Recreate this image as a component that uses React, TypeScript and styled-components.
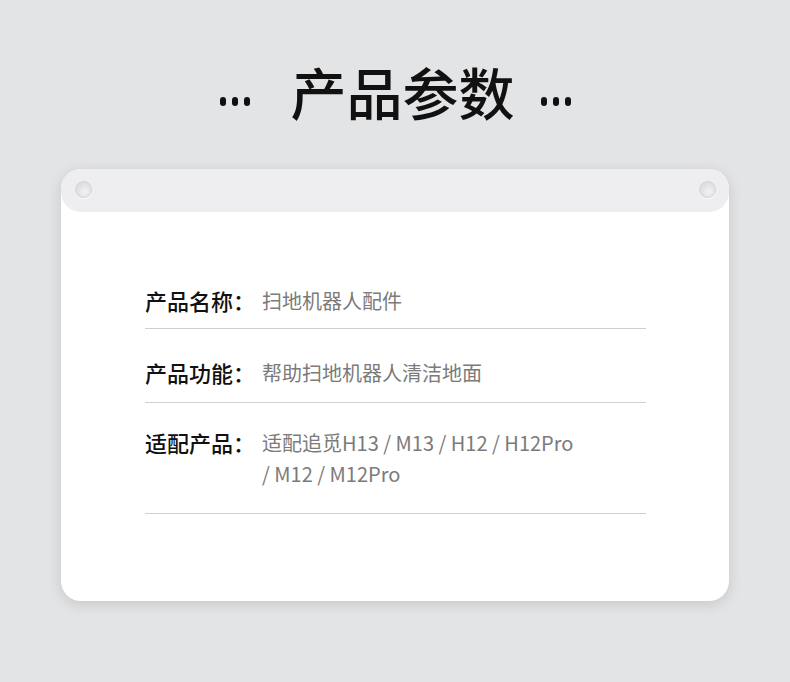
import React from 'react';
import styled, { createGlobalStyle } from 'styled-components';

const GlobalStyle = createGlobalStyle`
  html, body {
    margin: 0;
    padding: 0;
    background: #e3e4e6;
    font-family: "Noto Sans CJK SC", "Noto Sans", sans-serif;
  }
`;

const Page = styled.div`
  width: 790px;
  height: 682px;
  box-sizing: border-box;
  padding-top: 58px;
  display: flex;
  flex-direction: column;
  align-items: center;
`;

const TitleRow = styled.div`
  display: flex;
  align-items: center;
  height: 66px;
`;

const Title = styled.h1`
  margin: 0 26px 0 41px;
  font-size: 56px;
  font-weight: 500;
  color: #111;
  letter-spacing: 0;
  line-height: 66px;
`;

const Dots = styled.div`
  display: flex;
  gap: 6px;
  margin-top: 20px;
`;

const Dot = styled.span`
  width: 6px;
  height: 9px;
  border-radius: 3px;
  background: #111;
`;

const Card = styled.div`
  margin-top: 45px;
  width: 668px;
  height: 432px;
  background: #fff;
  border-radius: 20px;
  box-shadow: 0 3px 14px rgba(0, 0, 0, 0.13);
  display: flex;
  flex-direction: column;
`;

const TopBar = styled.div`
  height: 41px;
  background: #eeeef0;
  border-radius: 20px;
  display: flex;
  align-items: center;
  justify-content: space-between;
  padding: 0 13px 2px 14px;
`;

const Pin = styled.span`
  width: 17px;
  height: 17px;
  border-radius: 50%;
  box-sizing: border-box;
  border: 1px solid #d3d4d7;
  background: radial-gradient(circle at 60% 65%, #f1f1f3 0%, #dcdde0 70%, #d0d1d4 100%);
  box-shadow: 0 1px 1px rgba(255, 255, 255, 0.8);
`;

const Content = styled.div`
  padding: 48px 83px 0 84px;
`;

const Row = styled.div<{ $top: number; $bottom: number }>`
  display: flex;
  align-items: flex-start;
  padding: ${({ $top, $bottom }) => `${$top}px 0 ${$bottom}px`};
  border-bottom: 1px solid #cfcfcf;
`;

const Label = styled.div`
  width: 117px;
  flex-shrink: 0;
  font-size: 22px;
  font-weight: 500;
  color: #111;
  line-height: 31px;
`;

const Value = styled.div`
  width: 318px;
  font-size: 20px;
  color: #7b7b7b;
  line-height: 31px;
`;

const params = [
  { label: '产品名称：', value: '扫地机器人配件', top: 25, bottom: 12 },
  { label: '产品功能：', value: '帮助扫地机器人清洁地面', top: 28, bottom: 14 },
  { label: '适配产品：', value: '适配追觅H13 / M13 / H12 / H12Pro / M12 / M12Pro', top: 24, bottom: 24 },
];

const DotGroup = () => (
  <Dots>
    <Dot />
    <Dot />
    <Dot />
  </Dots>
);

export default function App() {
  return (
    <Page>
      <GlobalStyle />
      <TitleRow>
        <DotGroup />
        <Title>产品参数</Title>
        <DotGroup />
      </TitleRow>
      <Card>
        <TopBar>
          <Pin />
          <Pin />
        </TopBar>
        <Content>
          {params.map((p) => (
            <Row key={p.label} $top={p.top} $bottom={p.bottom}>
              <Label>{p.label}</Label>
              <Value>{p.value}</Value>
            </Row>
          ))}
        </Content>
      </Card>
    </Page>
  );
}
